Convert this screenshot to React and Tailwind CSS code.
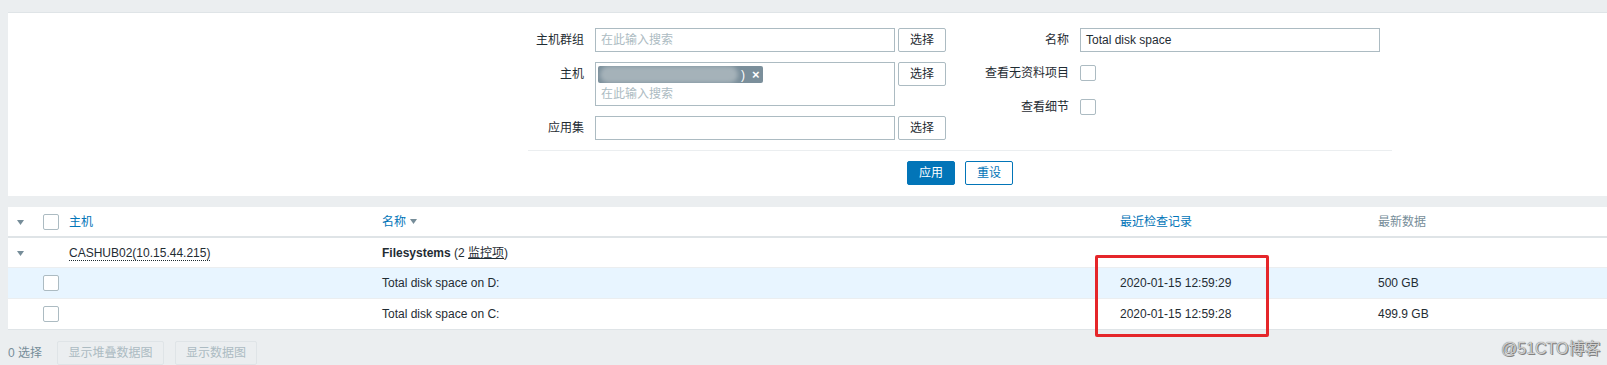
import React from 'react';

const cjk = { fontFamily: '"Liberation Sans", Arial, "Noto Sans CJK SC", sans-serif' };

function Box({ className = '' }) {
  return <span className={`inline-block w-4 h-4 border border-[#acbbc2] bg-white rounded-[2px] ${className}`} />;
}

function Caret() {
  return (
    <svg width="7" height="5" viewBox="0 0 7 5" className="inline-block">
      <path d="M0 0h7L3.5 5z" fill="#768d99" />
    </svg>
  );
}

function SelectBtn() {
  return (
    <button className="ml-[3px] w-12 h-6 border border-[#acbbc2] bg-white text-[#1f2c33] text-xs rounded-[2px]">选择</button>
  );
}

export default function App() {
  return (
    <div className="relative w-[1607px] h-[365px] bg-[#ebeef0] text-xs text-[#1f2c33] overflow-hidden" style={cjk}>
      {/* filter panel */}
      <div className="ml-2 mt-3 h-[184px] bg-white border-t border-[#dfe4e7]">
        <div className="ml-[520px] w-[864px] pt-[15px]">
          <div className="flex">
            {/* left column */}
            <div className="flex flex-col gap-[10px]">
              <div className="flex items-center h-6">
                <label className="w-[67px] pr-[11px] text-right whitespace-nowrap">主机群组</label>
                <div className="w-[300px] h-6 border border-[#acbbc2] px-[5px] flex items-center text-[#acbbc2]">在此输入搜索</div>
                <SelectBtn />
              </div>
              <div className="flex items-start h-[44px]">
                <label className="w-[67px] pr-[11px] text-right leading-6">主机</label>
                <div className="w-[300px] h-[44px] border border-[#acbbc2] px-[2px] pt-[3px]">
                  <div className="relative flex items-center w-[165px] h-[17px] bg-[#7b8f9b] rounded-[2px] pl-[2px] overflow-hidden">
                    <div className="w-[138px] h-[17px] rounded-full bg-[#a5b2b9] blur-[2px]" />
                    <span className="ml-[3px] text-white">)</span>
                    <span className="ml-[7px] text-white font-bold text-[13px] leading-none">×</span>
                  </div>
                  <div className="pl-[3px] mt-[3px] text-[#acbbc2]">在此输入搜索</div>
                </div>
                <SelectBtn />
              </div>
              <div className="flex items-center h-6">
                <label className="w-[67px] pr-[11px] text-right">应用集</label>
                <div className="w-[300px] h-6 border border-[#acbbc2]" />
                <SelectBtn />
              </div>
            </div>
            {/* right column */}
            <div className="flex flex-col">
              <div className="flex items-center h-6">
                <label className="w-[134px] pr-[11px] text-right">名称</label>
                <div className="w-[300px] h-6 border border-[#acbbc2] px-[5px] flex items-center">Total disk space</div>
              </div>
              <div className="flex items-center h-6 mt-[9px]">
                <label className="w-[134px] pr-[11px] text-right">查看无资料项目</label>
                <Box />
              </div>
              <div className="flex items-center h-6 mt-[10px]">
                <label className="w-[134px] pr-[11px] text-right">查看细节</label>
                <Box />
              </div>
            </div>
          </div>
          <div className="mt-[10px] border-t border-[#ebeef0]" />
          <div className="flex justify-center gap-[10px] mt-[10px]">
            <button className="w-12 h-6 bg-[#0275b8] border border-[#0275b8] text-white rounded-[2px]">应用</button>
            <button className="w-12 h-6 bg-white border border-[#0275b8] text-[#0275b8] rounded-[2px]">重设</button>
          </div>
        </div>
      </div>

      {/* table */}
      <div className="ml-2 mt-[11px] bg-white">
        <div className="flex items-center h-[31px] border-b-2 border-[#dfe4e7]">
          <span className="w-[35px] pl-[9px]"><Caret /></span>
          <span className="w-[26px] flex"><Box /></span>
          <span className="w-[313px] text-[#0275b8]">主机</span>
          <span className="w-[738px] text-[#0275b8] flex items-center gap-1">名称 <Caret /></span>
          <span className="w-[258px] text-[#0275b8]">最近检查记录</span>
          <span className="text-[#768d99]">最新数据</span>
        </div>
        <div className="flex items-center h-[30px] border-b border-[#ebeef0]">
          <span className="w-[61px] pl-[9px]"><Caret /></span>
          <span className="w-[313px]">
            <span className="border-b border-dotted border-[#1f2c33]">CASHUB02(10.15.44.215)</span>
          </span>
          <span>
            <b className="font-bold">Filesystems</b> (2 <span className="underline">监控项</span>)
          </span>
        </div>
        <div className="flex items-center h-[31px] bg-[#e8f5ff] border-b border-[#ebeef0]">
          <span className="w-[61px] pl-[35px] flex"><Box /></span>
          <span className="w-[313px]" />
          <span className="w-[738px]">Total disk space on D:</span>
          <span className="w-[258px]">2020-01-15 12:59:29</span>
          <span>500 GB</span>
        </div>
        <div className="flex items-center h-[31px] border-b border-[#dfe4e7]">
          <span className="w-[61px] pl-[35px] flex"><Box /></span>
          <span className="w-[313px]" />
          <span className="w-[738px]">Total disk space on C:</span>
          <span className="w-[258px]">2020-01-15 12:59:28</span>
          <span>499.9 GB</span>
        </div>
      </div>

      {/* footer */}
      <div className="flex items-center mt-[11px] ml-2 gap-[11px]">
        <span className="text-[#768d99] w-[38px]">0 选择</span>
        <button className="w-[107px] h-6 border border-[#dfe4e7] bg-[#ebeef0] text-[#acbbc2] rounded-[2px]">显示堆叠数据图</button>
        <button className="w-[82px] h-6 border border-[#dfe4e7] bg-[#ebeef0] text-[#acbbc2] rounded-[2px]">显示数据图</button>
      </div>

      {/* red highlight box */}
      <div className="absolute left-[1095px] top-[255px] w-[174px] h-[82px] border-[3px] border-[#e5262a] rounded-[2px]" />

      {/* watermark */}
      <div
        className="absolute left-[1501px] top-[338px] text-[16px] text-[#d0d0d0]"
        style={{ textShadow: '0 0 1px #555, 1px 1px 0 #888' }}
      >
        @51CTO博客
      </div>
    </div>
  );
}
